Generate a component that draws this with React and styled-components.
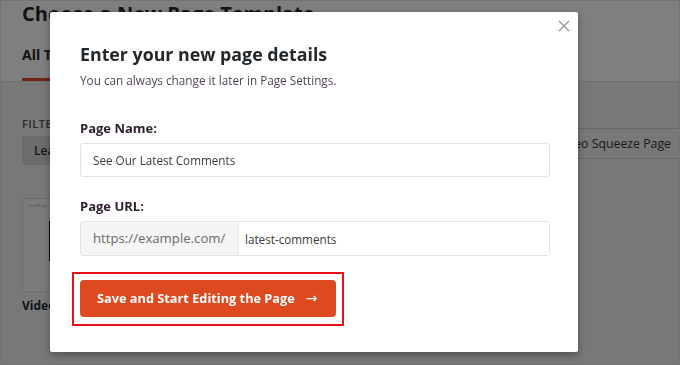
import React, { useState } from 'react'
import styled, { createGlobalStyle } from 'styled-components'

const GlobalStyle = createGlobalStyle`
  html, body {
    margin: 0;
    padding: 0;
    width: 680px;
    height: 365px;
    overflow: hidden;
    font-family: "Open Sans", "Noto Sans", "Liberation Sans", sans-serif;
  }
`

function App() {
  const [name, setName] = useState('See Our Latest Comments')
  const [slug, setSlug] = useState('latest-comments')

  return (
    <>
      <GlobalStyle />
      <Page>
        <PageHeader>
          <PageTitle>Choose a New Page Template</PageTitle>
          <Tabs>
            <Tab active>All Templates</Tab>
            <Tab>Saved Templates</Tab>
          </Tabs>
        </PageHeader>
        <PageBody>
          <FilterRow>
            <div>
              <FilterLabel>FILTER</FilterLabel>
              <FilterButton>Lead</FilterButton>
            </div>
            <TemplateSelect>Video Squeeze Page</TemplateSelect>
          </FilterRow>
          <Card>
            <CardTop>SeedProd</CardTop>
            <CardBar />
          </Card>
          <CardName>Video</CardName>
        </PageBody>
      </Page>

      <Overlay>
        <Modal>
          <Close aria-label="close">
            <svg width="12" height="12" viewBox="0 0 12 12">
              <path d="M1 1L11 11M11 1L1 11" stroke="#9a9a9a" strokeWidth="1.4" />
            </svg>
          </Close>
          <Title>Enter your new page details</Title>
          <Subtitle>You can always change it later in Page Settings.</Subtitle>

          <Field>
            <Label>Page Name:</Label>
            <TextInput value={name} onChange={(e) => setName(e.target.value)} />
          </Field>

          <Field>
            <Label>Page URL:</Label>
            <UrlGroup>
              <UrlPrefix>https://example.com/</UrlPrefix>
              <UrlInput value={slug} onChange={(e) => setSlug(e.target.value)} />
            </UrlGroup>
          </Field>

          <Highlight>
            <SaveButton>
              Save and Start Editing the Page <Arrow>→</Arrow>
            </SaveButton>
          </Highlight>
        </Modal>
      </Overlay>
    </>
  )
}

export default App

const Page = styled.div`
  width: 680px;
  height: 365px;
  background: #f1f1f1;
  box-sizing: border-box;
  border: 1px solid #e6e6e6;
`
const PageHeader = styled.div`
  background: #ffffff;
  padding: 0 21px 0;
  border-bottom: 1px solid #e2e2e2;
`
const PageTitle = styled.div`
  font-size: 20px;
  font-weight: 700;
  color: #23282d;
  line-height: 26px;
`
const Tabs = styled.div`
  display: flex;
  gap: 28px;
  margin-top: 18px;
`
const Tab = styled.div`
  font-size: 14px;
  font-weight: 700;
  color: #23282d;
  padding-bottom: 14px;
  border-bottom: 3px solid ${(p) => (p.active ? '#dd4a1f' : 'transparent')};
`
const PageBody = styled.div`
  padding: 34px 0 0 21px;
`
const FilterRow = styled.div`
  display: flex;
  justify-content: space-between;
  align-items: flex-end;
`
const FilterLabel = styled.div`
  font-size: 11px;
  font-weight: 600;
  color: #555;
  letter-spacing: 0.5px;
`
const FilterButton = styled.div`
  margin-top: 5px;
  width: 60px;
  height: 29px;
  line-height: 29px;
  background: #d9d9d9;
  border-radius: 2px;
  padding-left: 12px;
  font-size: 12px;
  font-weight: 600;
  color: #333;
`
const TemplateSelect = styled.div`
  width: 150px;
  height: 29px;
  line-height: 29px;
  margin-bottom: 6px;
  border-top: 1px solid #cfcfcf;
  border-bottom: 1px solid #cfcfcf;
  font-size: 12.3px;
  color: #333;
  text-align: right;
  padding-right: 8px;
  white-space: nowrap;
`
const Card = styled.div`
  margin-top: 33px;
  width: 120px;
  height: 92px;
  background: #f6f6f6;
  border: 1px solid #dcdcdc;
  position: relative;
`
const CardTop = styled.div`
  font-size: 4px;
  color: #999;
  padding: 4px 5px;
`
const CardBar = styled.div`
  position: absolute;
  left: 26px;
  top: 22px;
  width: 3px;
  height: 40px;
  background: #111;
`
const CardName = styled.div`
  margin-top: 5px;
  font-size: 12px;
  font-weight: 700;
  color: #23282d;
`
const Overlay = styled.div`
  position: fixed;
  inset: 0;
  background: rgba(0, 0, 0, 0.5);
  padding: 12px 0 0 50px;
`
const Modal = styled.div`
  position: relative;
  width: 528px;
  height: 340px;
  box-sizing: border-box;
  background: #ffffff;
  border-radius: 2px;
  box-shadow: 0 3px 8px rgba(0, 0, 0, 0.35);
  padding: 29px 30px 0;
`
const Close = styled.button`
  position: absolute;
  top: 8px;
  right: 8px;
  border: 0;
  background: none;
  padding: 0;
  width: 12px;
  height: 12px;
  display: flex;
`
const Title = styled.h2`
  margin: 0;
  font-size: 17.8px;
  line-height: 26px;
  font-weight: 700;
  color: #23282d;
`
const Subtitle = styled.p`
  margin: 5px 0 0;
  font-size: 11.75px;
  line-height: 17px;
  color: #524458;
`
const Field = styled.div`
  margin-top: 30px;
  & + & {
    margin-top: 20px;
  }
`
const Label = styled.div`
  font-size: 13px;
  font-weight: 700;
  color: #2d1f2d;
  line-height: 18px;
  margin-bottom: 6px;
`
const TextInput = styled.input`
  display: block;
  box-sizing: border-box;
  width: 470px;
  height: 34px;
  border: 1px solid #e3e3e3;
  border-radius: 3px;
  padding: 0 12px;
  font-family: inherit;
  font-size: 11.7px;
  color: #3a3a3a;
  outline: none;
`
const UrlGroup = styled.div`
  display: flex;
  width: 470px;
  height: 35px;
  box-sizing: border-box;
  border: 1px solid #e3e3e3;
  border-radius: 3px;
  overflow: hidden;
`
const UrlPrefix = styled.div`
  width: 158px;
  background: #f5f5f5;
  padding-left: 12px;
  box-sizing: border-box;
  font-size: 13.2px;
  line-height: 33px;
  color: #6b6b6b;
  border-right: 1px solid #ececec;
`
const UrlInput = styled.input`
  flex: 1;
  border: 0;
  padding: 0 6px;
  font-family: inherit;
  font-size: 11.7px;
  color: #3a3a3a;
  outline: none;
`
const Highlight = styled.div`
  margin-top: 16px;
  margin-left: -8px;
  width: 272px;
  height: 54px;
  box-sizing: border-box;
  border: 2px solid #e8101a;
  padding: 6px;
`
const SaveButton = styled.button`
  display: flex;
  align-items: center;
  width: 256px;
  height: 37px;
  border: 0;
  border-radius: 4px;
  background: #dd4a1f;
  color: #ffffff;
  font-family: inherit;
  font-size: 12.75px;
  font-weight: 700;
  padding: 0 0 1px 17px;
`
const Arrow = styled.span`
  margin-left: 11px;
  font-family: "DejaVu Sans", sans-serif;
  font-size: 14px;
  font-weight: 400;
  line-height: 1;
`
